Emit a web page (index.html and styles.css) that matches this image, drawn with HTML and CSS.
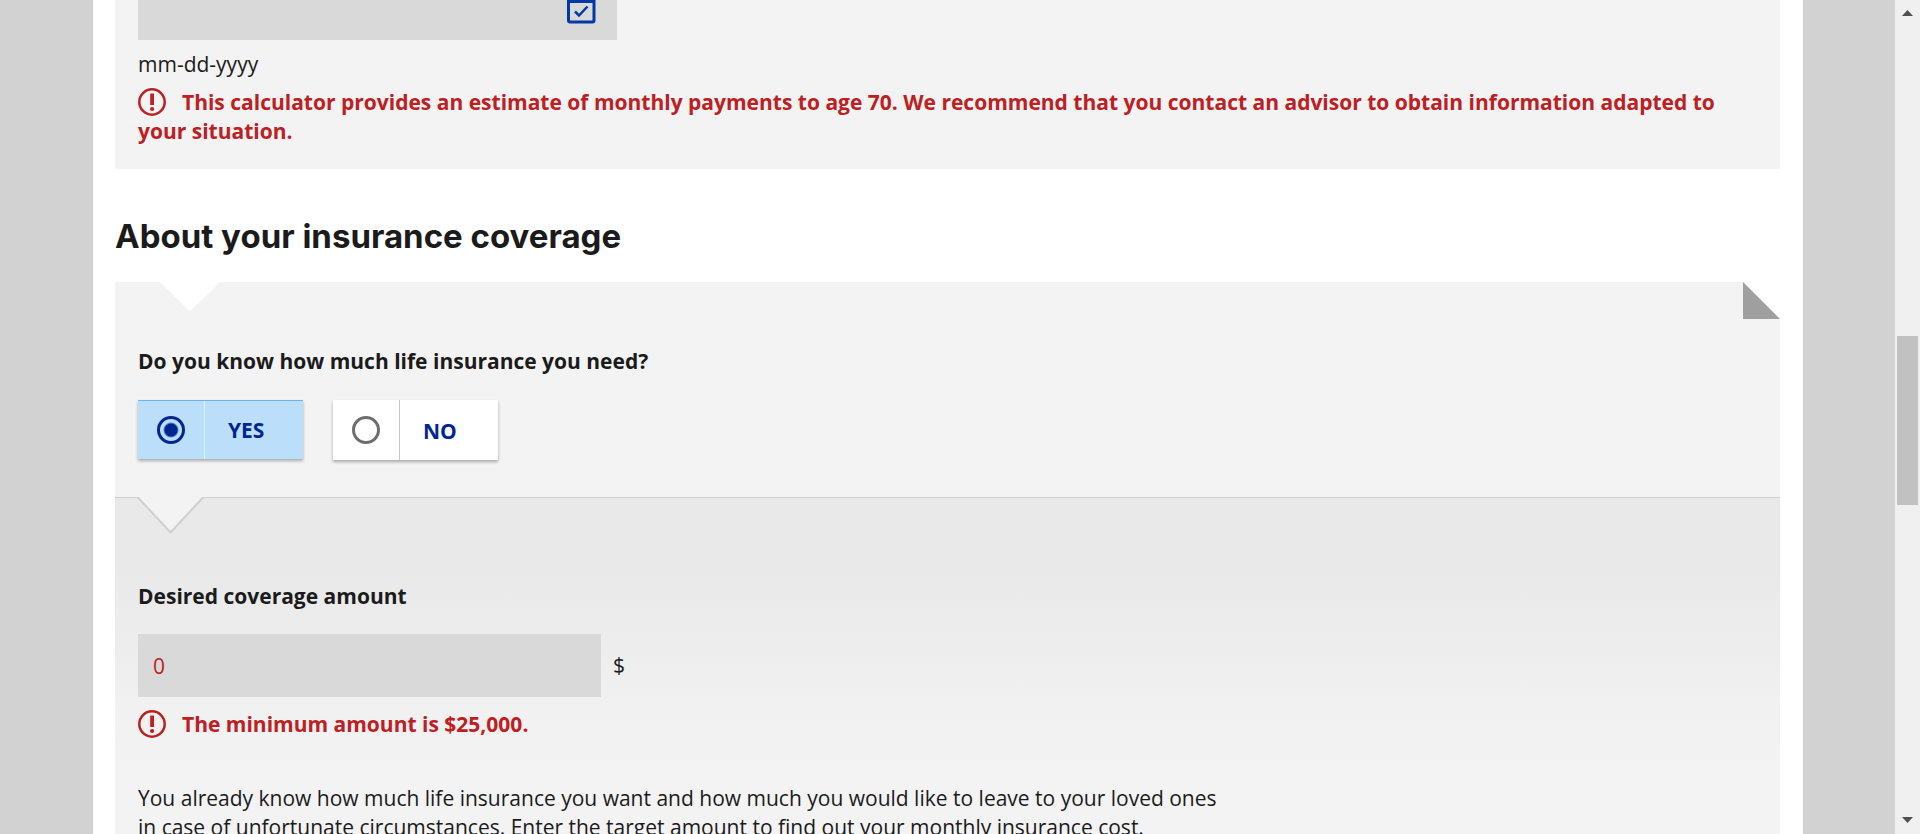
FILE: index.html
```html
<!DOCTYPE html>
<html lang="en">
<head>
<meta charset="utf-8">
<title>Life insurance calculator</title>
<link rel="stylesheet" href="styles.css">
</head>
<body>
<div class="window">
  <main class="page">
    <section class="panel panel-birth">
      <div class="date-field">
        <input class="date-input" type="text" aria-label="Date of birth">
        <button class="date-button" type="button" aria-label="Choose a date">
          <svg width="30" height="32" viewBox="0 0 30 32" fill="none" stroke="#0039a6"><rect x="2.500" y="5" width="25.500" height="25" rx="1.500" stroke-width="3"/><path d="M2 9h27" stroke-width="4"/><path d="M9 19.500l4 4 8.500-9" stroke-width="2.500"/></svg>
        </button>
      </div>
      <p class="hint">mm-dd-yyyy</p>
      <p class="error"><svg class="error-icon" viewBox="0 0 28 28"><circle cx="14" cy="14" r="12.700" fill="none" stroke="#bd2022" stroke-width="2.500"/><path d="M12.200 5.500h3.800v11.500h-3.800z" fill="#bd2022"/><circle cx="14.100" cy="21" r="2.100" fill="#bd2022"/></svg>This calculator provides an estimate of monthly payments to age 70. We recommend that you contact an advisor to obtain information adapted to your situation.</p>
    </section>

    <h2 class="title">About your insurance coverage</h2>

    <section class="panel panel-coverage">
      <svg class="notch" width="60" height="30" viewBox="0 0 60 30"><path d="M0 0h60L30 29.500z" fill="#fff"/></svg>
      <svg class="fold" width="37" height="37" viewBox="0 0 37 37"><path d="M0 0h37v37z" fill="#fff"/><path d="M0 0v37h37z" fill="#9f9f9f"/></svg>
      <fieldset class="question">
        <legend class="label legend">Do you know how much life insurance you need?</legend>
        <div class="choices">
          <label class="choice"><span class="mark"><input class="radio" type="radio" name="know" checked></span><span class="choice-text">YES</span></label>
          <label class="choice"><span class="mark"><input class="radio" type="radio" name="know"></span><span class="choice-text">NO</span></label>
        </div>
      </fieldset>
      <div class="details">
        <svg class="notch-line" width="67" height="38" viewBox="0 0 67 38"><path d="M1 0h65L33.500 35z" fill="#f3f3f3"/><path d="M0 1h1.500L33.500 35.500 65.500 1H67" fill="none" stroke="#d0d0d0" stroke-width="2"/></svg>
        <label class="label" for="amount">Desired coverage amount</label>
        <div class="amount-row">
          <input class="amount" id="amount" type="text" value="0">
          <span>$</span>
        </div>
        <p class="error"><svg class="error-icon" viewBox="0 0 28 28"><circle cx="14" cy="14" r="12.700" fill="none" stroke="#bd2022" stroke-width="2.500"/><path d="M12.200 5.500h3.800v11.500h-3.800z" fill="#bd2022"/><circle cx="14.100" cy="21" r="2.100" fill="#bd2022"/></svg>The minimum amount is $25,000.</p>
        <p class="help">You already know how much life insurance you want and how much you would like to leave to your loved ones in case of unfortunate circumstances. Enter the target amount to find out your monthly insurance cost.</p>
      </div>
    </section>
  </main>
  <div class="scrollbar" aria-hidden="true">
    <svg width="11" height="6" viewBox="0 0 11 6"><path d="M0 6L5.500 0 11 6z" fill="#505050"/></svg>
    <div class="track"><div class="thumb"></div></div>
    <svg width="11" height="6" viewBox="0 0 11 6"><path d="M0 0L5.500 6 11 0z" fill="#505050"/></svg>
  </div>
</div>
</body>
</html>
```
FILE: styles.css
```css
* { box-sizing: border-box; }
body {
  margin: 0;
  background: #d2d2d2;
  color: #1b1b1b;
  font: 400 21px/29px "Open Sans", "Noto Sans", sans-serif;
}
p, h2, fieldset { margin: 0; padding: 0; border: 0; }
.window {
  display: grid;
  grid-template-columns: 1fr 25px;
  height: 100vh;
  overflow: hidden;
}
.page {
  margin: 0 92px 0 93px;
  padding: 0 23px 0 22px;
  background: #fff;
  box-shadow: 0 0 4px rgba(0, 0, 0, .04);
  overflow: hidden;
}
.panel { position: relative; background: #f3f3f3; }
.panel-birth { padding: 0 23px 23px; }
.date-field {
  display: flex;
  align-items: flex-start;
  width: 479px;
  max-width: 100%;
  height: 40px;
  padding-right: 21px;
  background: #d9d9d9;
}
.date-input { flex: 1; min-width: 0; height: 40px; border: 0; background: none; font: inherit; }
.date-button { height: 24px; padding: 0; border: 0; background: none; display: flex; align-items: flex-end; }
.hint { padding: 10px 0 9px; }
.error { font-weight: 700; color: #bd2022; }
.error-icon { width: 28px; height: 28px; margin: -6px 16px -6px 0; vertical-align: 0; }
.title {
  padding: 46px 0 24px;
  font: 700 33px/43px Inter, "Open Sans", sans-serif;
}
.notch { position: absolute; left: 45px; top: 0; }
.fold { position: absolute; right: 0; top: 0; }
.question { padding: 0 23px 37px; }
.label { display: block; padding: 0; font-weight: 700; }
.legend { padding-top: 65px; }
.choices { display: flex; gap: 30px; padding-top: 24px; }
.choice {
  display: flex;
  width: 165px;
  height: 60px;
  background: #fff;
  box-shadow: 0 2px 3px rgba(0, 0, 0, .3);
  color: #00268f;
  font-weight: 700;
}
.mark { display: flex; align-items: center; justify-content: center; width: 67px; border-right: 1px solid #c8c8c8; }
.choice-text { display: flex; align-items: center; padding: 2px 0 0 23px; }
.radio { appearance: none; width: 28px; height: 28px; margin: 0; border: 3px solid #6e6e6e; border-radius: 50%; }
.choice:has(:checked) { height: 59px; background: #bbdefb; border-top: 1px solid #64b5f6; }
.choice:has(:checked) .mark { border-color: #e3f2fd; }
.choice:has(:checked) .choice-text { padding-top: 0; }
.radio:checked { border-color: #00268f; background: radial-gradient(circle, #00268f 6px, transparent 8px); }
.details {
  position: relative;
  padding: 84px 23px 24px;
  border-top: 1px solid #d0d0d0;
  background: linear-gradient(#e9e9e9 0, #e9e9e9 70px, #ededed 145px, #f1f1f1 210px, #f3f3f3 270px);
}
.notch-line { position: absolute; left: 22px; top: -1px; }
.amount-row { display: flex; align-items: center; gap: 12px; padding: 23px 0 13px; }
.amount {
  width: 463px;
  height: 63px;
  padding: 0 15px;
  border: 0;
  background: #d9d9d9;
  color: #bd2022;
  font: inherit;
}
.help { max-width: 1090px; padding-top: 45px; }
.scrollbar {
  display: flex;
  flex-direction: column;
  align-items: center;
  padding: 10px 0 11px;
  background: #f0f0f0;
}
.track { flex: 1; width: 21px; display: flex; flex-direction: column; padding-top: 320px; }
.thumb { height: 169px; background: #c1c1c1; }
```
